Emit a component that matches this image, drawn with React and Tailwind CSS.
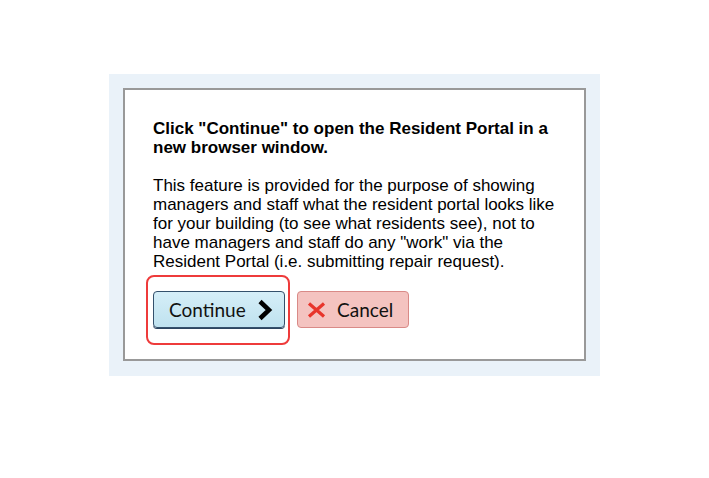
export default function App() {
  return (
    <div className="min-h-[478px] w-[709px] bg-white pt-[74px] pl-[109px]">
      <div className="w-[491px] h-[302px] bg-[#eaf2f9] p-[14px]">
        <div className="h-[273px] border-2 border-[#999] bg-white pl-[28px] pt-[29px] font-['Liberation_Sans',Arial,sans-serif] text-[17px] leading-[19px] text-black">
          <p className="font-bold whitespace-nowrap">
            Click "Continue" to open the Resident Portal in a<br />
            new browser window.
          </p>
          <p className="mt-[19px] whitespace-nowrap">
            This feature is provided for the purpose of showing<br />
            managers and staff what the resident portal looks like<br />
            for your building (to see what residents see), not to<br />
            have managers and staff do any "work" via the<br />
            Resident Portal (i.e. submitting repair request).
          </p>
          <div className="mt-[20px] flex gap-[12px] font-['Lato',sans-serif] text-[19px]">
            <div className="relative">
              <button className="flex h-[37px] w-[132px] items-center rounded-[4px] border-[1.5px] border-[#34506c] bg-gradient-to-b from-[#d5eef8] to-[#bfe2ef] pl-[15px] text-[#111] shadow-[0_1px_0_#2c4560]">
                <span>Continue</span>
                <svg width="16" height="22" viewBox="0 0 16 22" className="ml-[11px]">
                  <polyline points="3,2.5 12,11 3,19.5" fill="none" stroke="#000" strokeWidth="4.5" strokeLinejoin="miter" />
                </svg>
              </button>
              <div className="pointer-events-none absolute -left-[7px] -top-[16px] h-[70px] w-[144px] rounded-[8px] border-2 border-[#ee3b3b]" />
            </div>
            <button className="flex h-[37px] w-[112px] items-center rounded-[4px] border-[1.5px] border-[#d98a87] bg-[#f4c3c0] pl-[9px] text-[#111]">
              <svg width="19" height="16" viewBox="0 0 19 16">
                <path d="M2 1.5 L17 14.5 M17 1.5 L2 14.5" stroke="#e8342b" strokeWidth="3.2" fill="none" />
              </svg>
              <span className="ml-[11px]">Cancel</span>
            </button>
          </div>
        </div>
      </div>
    </div>
  );
}
